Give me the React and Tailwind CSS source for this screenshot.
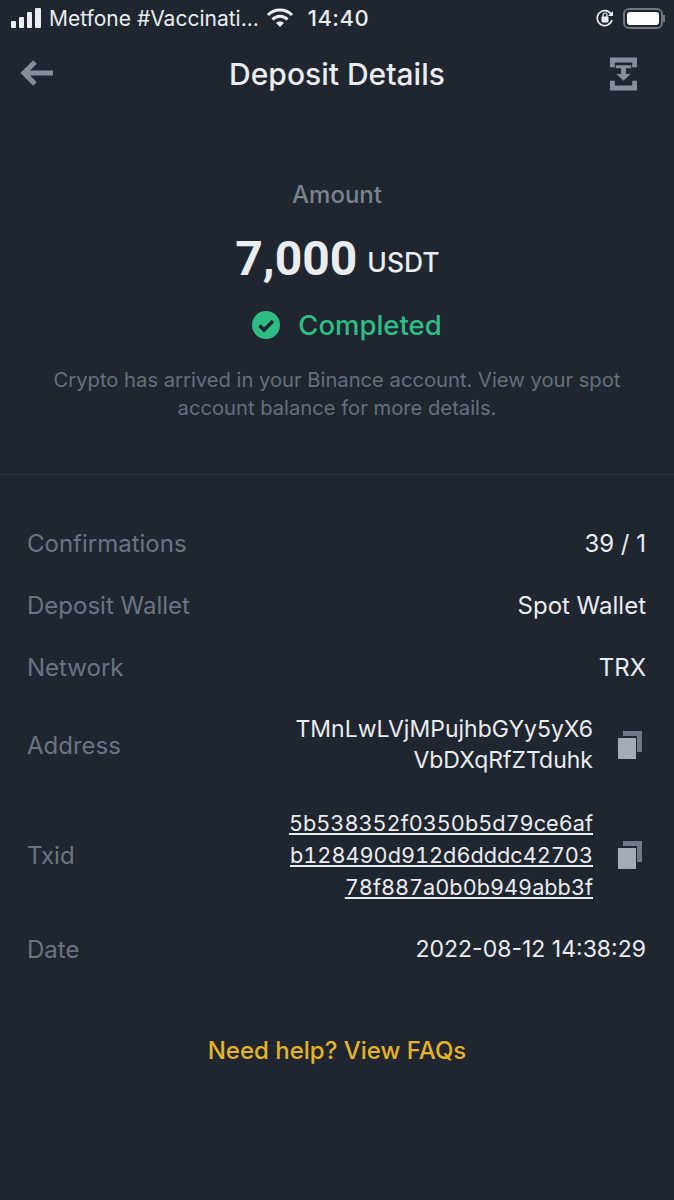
const CopyIcon = () => (
  <svg width="24" height="28" viewBox="0 0 24 28" className="shrink-0">
    <path d="M5 0h19v21h-5V5H5z" fill="#848e9c" opacity="0.8" />
    <rect x="0" y="7" width="18" height="21" fill="#a3abb7" />
  </svg>
);

const Row = ({ label, children }) => (
  <div className="flex items-center justify-between">
    <span className="text-[#6b7482]">{label}</span>
    {children}
  </div>
);

const App = () => {
  return (
    <div className="w-[674px] h-[1200px] bg-[#1f2630] overflow-hidden font-['Inter',sans-serif]">
      {/* Status bar */}
      <div className="flex items-center h-9 pl-[11px] pr-[9px] text-[#eaecef]">
        <svg width="31" height="20" viewBox="0 0 31 20" fill="#eaecef">
          <rect x="0" y="13" width="5" height="7" rx="1" />
          <rect x="8" y="9" width="5" height="11" rx="1" />
          <rect x="16" y="4" width="5" height="16" rx="1" />
          <rect x="24" y="0" width="6" height="20" rx="1" />
        </svg>
        <span className="ml-[7px] text-[21px] leading-none">Metfone #Vaccinati...</span>
        <svg width="28" height="20" viewBox="0 0 28 20" fill="none" stroke="#eaecef" strokeWidth="3" className="ml-[7px]">
          <path d="M2 7a17 17 0 0 1 24 0" />
          <path d="M6.500 11.500a10.500 10.500 0 0 1 15 0" />
          <path d="M14 19l-4-4a5.500 5.500 0 0 1 8 0z" fill="#eaecef" stroke="none" />
        </svg>
        <span className="ml-[14px] text-[22px] leading-none tracking-[0.5px] font-medium">14:40</span>
        <svg width="20" height="20" viewBox="0 0 20 20" fill="none" className="ml-auto">
          <path d="M16 6a7.500 7.500 0 1 0 1 6" stroke="#eaecef" strokeWidth="1.600" />
          <path d="M18 3v5h-5z" fill="#eaecef" />
          <rect x="6.500" y="8.500" width="7" height="6" rx="1" fill="#eaecef" />
          <path d="M8 9V7a2 2 0 0 1 4 0v2" stroke="#eaecef" strokeWidth="1.200" />
        </svg>
        <div className="ml-[8px] flex items-center">
          <div className="w-[40px] h-[21px] rounded-[6px] border-2 border-[#6f7680] p-[2px]">
            <div className="w-full h-full rounded-[3px] bg-white" />
          </div>
          <div className="w-[2px] h-[7px] bg-[#6f7680]" />
        </div>
      </div>

      {/* Header */}
      <div className="flex items-center justify-between h-[64px] pl-[20px] pr-[37px] mt-[6px]">
        <svg width="33" height="28" viewBox="0 0 33 28" fill="none" stroke="#848e9c" strokeWidth="5" className="-mt-[2px]">
          <path d="M15 3L4 14l11 11M4 14h29" />
        </svg>
        <h1 className="text-[30px] font-medium text-[#eaecef] leading-none ml-[11px]">Deposit Details</h1>
        <svg width="27" height="34" viewBox="0 0 28 34" fill="#848e9c">
          <path d="M0 0h28v10h-5V5H5v5H0zM0 24h5v5h18v-5h5v10H0z" />
          <path d="M6 8h16v3H6zM11.500 11h5v6h5l-7.500 7-7.500-7h5z" />
        </svg>
      </div>

      {/* Amount */}
      <div className="flex flex-col items-center mt-[74px]">
        <span className="text-[24px] leading-[30px] font-medium text-[#7a8390]">Amount</span>
        <div className="flex items-center gap-[10px] mt-[20px] ml-[1px] text-[#eaecef]">
          <span className="text-[48px] leading-[58px] font-bold font-['Roboto',sans-serif]">7,000</span>
          <span className="text-[26.500px] leading-[32px] font-medium mt-[6px]">USDT</span>
        </div>
        <div className="flex items-center gap-[18px] mt-[19px] ml-[20px]">
          <svg width="28" height="28" viewBox="0 0 28 28">
            <circle cx="14" cy="14" r="14" fill="#2ebd85" />
            <path d="M7.500 14.500l4.500 4.500 9-9" fill="none" stroke="#1f2630" strokeWidth="3.500" />
          </svg>
          <span className="text-[27.500px] leading-[36px] font-medium text-[#2ebd85]">Completed</span>
        </div>
        <p className="mt-[23px] w-[600px] text-center text-[20.200px] leading-[28px] text-[#666f7c]">
          Crypto has arrived in your Binance account. View your spot
          <br />
          account balance for more details.
        </p>
      </div>

      <div className="mt-[52px] h-px bg-[#2f3640]" />

      {/* Details */}
      <div className="flex flex-col gap-[31px] pl-[27px] pr-[28px] mt-[53px] text-[24px] leading-[31px] text-[#eaecef]">
        <Row label="Confirmations"><span>39 / 1</span></Row>
        <Row label="Deposit Wallet"><span>Spot Wallet</span></Row>
        <Row label="Network"><span>TRX</span></Row>
        <Row label="Address">
          <div className="flex items-center gap-[25px] pr-[4px]">
            <span className="text-right w-[310px] text-[23px]">
              TMnLwLVjMPujhbGYy5yX6
              <br />
              VbDXqRfZTduhk
            </span>
            <CopyIcon />
          </div>
        </Row>
        <Row label="Txid">
          <div className="flex items-center gap-[25px] pr-[4px]">
            <span className="text-right w-[310px] text-[21.700px] leading-[32px] underline tabular-nums">
              5b538352f0350b5d79ce6af
              <br />
              b128490d912d6dddc42703
              <br />
              78f887a0b0b949abb3f
            </span>
            <CopyIcon />
          </div>
        </Row>
        <Row label="Date"><span className="text-[23px]">2022-08-12 14:38:29</span></Row>
      </div>

      <div className="mt-[70px] text-center text-[24px] leading-[31px] font-medium text-[#e5b32a]">
        Need help? View FAQs
      </div>
    </div>
  );
};

export default App;
